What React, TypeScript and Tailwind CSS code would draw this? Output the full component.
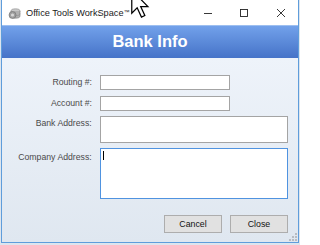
import React from "react";

const font = { fontFamily: '"Liberation Sans", Arial, sans-serif' };

function AppIcon() {
  return (
    <svg width="13" height="13" viewBox="0 0 13 13" className="shrink-0">
      <ellipse cx="7.5" cy="4" rx="4.5" ry="2.2" fill="#c8c8c8" stroke="#8a8a8a" strokeWidth="0.6" />
      <path d="M3 4 v5 a4.5 2.2 0 0 0 9 0 v-5" fill="#b0b0b0" stroke="#7c7c7c" strokeWidth="0.6" />
      <path d="M3 6.5 a4.5 2.2 0 0 0 9 0" fill="none" stroke="#8a8a8a" strokeWidth="0.6" />
      <ellipse cx="4.5" cy="8" rx="3.5" ry="3.5" fill="#9e9e9e" stroke="#6e6e6e" strokeWidth="0.6" />
      <ellipse cx="4.5" cy="8" rx="1.6" ry="1.6" fill="#d6d6d6" />
    </svg>
  );
}

function Cursor() {
  return (
    <svg
      width="20"
      height="30"
      viewBox="0 0 13 19"
      className="absolute left-[131px] top-[-11px]"
    >
      <path
        d="M0.5 0.5 L0.5 15.5 L4 12 L6.8 18 L9 17 L6.3 11.2 L11 11.2 Z"
        fill="#ffffff"
        stroke="#000000"
        strokeWidth="0.8"
        strokeLinejoin="miter"
      />
    </svg>
  );
}

function Grip() {
  const dots = [
    [6, 0],
    [3, 3],
    [6, 3],
    [0, 6],
    [3, 6],
    [6, 6],
  ];
  return (
    <svg width="8" height="8" viewBox="0 0 8 8" className="absolute right-[1px] bottom-[1px]">
      {dots.map(([x, y], i) => (
        <rect key={i} x={x} y={y} width="2" height="2" fill="#b8bcc2" />
      ))}
    </svg>
  );
}

export default function App() {
  return (
    <div className="relative w-[300px] h-[245px] overflow-hidden bg-[#dde5ee]" style={font}>
      <div className="ml-[1px] w-[298px] h-[243px] border border-t-0 border-[#5f9ddb] flex flex-col relative">
        {/* Title bar */}
        <div className="h-[25px] bg-white flex items-center shrink-0">
          <div className="ml-[6px] mt-[1px]">
            <AppIcon />
          </div>
          <span className="ml-[5px] text-[9.2px] text-[#1a1a1a] leading-none mt-[2px]">
            Office Tools WorkSpace<span className="text-[6px] align-top">™</span>
          </span>
          <div className="ml-auto flex items-center mt-[1px]">
            <svg width="10" height="10" viewBox="0 0 10 10" className="mr-[26px]">
              <line x1="1" y1="5.5" x2="9" y2="5.5" stroke="#222" strokeWidth="0.9" />
            </svg>
            <svg width="10" height="10" viewBox="0 0 10 10" className="mr-[27px]">
              <rect x="1.5" y="1.5" width="7" height="7" fill="none" stroke="#222" strokeWidth="0.9" />
            </svg>
            <svg width="10" height="10" viewBox="0 0 10 10" className="mr-[12px]">
              <line x1="1" y1="1" x2="9" y2="9" stroke="#222" strokeWidth="0.9" />
              <line x1="9" y1="1" x2="1" y2="9" stroke="#222" strokeWidth="0.9" />
            </svg>
          </div>
        </div>

        {/* Header */}
        <div className="h-[33px] shrink-0 border-t border-[#9dbff0] bg-gradient-to-b from-[#72a1ea] to-[#4673c8] flex items-center justify-center">
          <span className="text-white font-bold text-[16.5px] leading-none mb-[1px]">Bank Info</span>
        </div>

        {/* Body */}
        <div className="flex-1 bg-gradient-to-b from-[#eef3fa] to-[#dfe7f0] pt-[17px] pr-[10px] relative">
          <div className="flex">
            <div className="w-[90px] h-[15px] text-right text-[8.7px] leading-[15px] text-[#4a4a4a]">Routing #:</div>
            <div className="ml-[8px] w-[130px] h-[15px] bg-white border border-[#a4a4a4]" />
          </div>
          <div className="flex mt-[6px]">
            <div className="w-[90px] h-[15px] text-right text-[8.7px] leading-[15px] text-[#4a4a4a]">Account #:</div>
            <div className="ml-[8px] w-[130px] h-[15px] bg-white border border-[#a4a4a4]" />
          </div>
          <div className="flex mt-[5px]">
            <div className="w-[90px] text-right text-[8.7px] leading-[15px] text-[#4a4a4a]">Bank Address:</div>
            <div className="ml-[8px] w-[189px] h-[27px] bg-white border border-[#a4a4a4]" />
          </div>
          <div className="flex mt-[5px]">
            <div className="w-[90px] pt-[2px] text-right text-[8.7px] leading-[15px] text-[#4a4a4a]">Company Address:</div>
            <div className="ml-[8px] w-[189px] h-[51px] bg-white border border-[#4f93e0] pl-[2px] pt-[2px]">
              <div className="w-[1px] h-[9px] bg-black" />
            </div>
          </div>
          <div className="flex justify-end gap-[8px] mt-[16px]">
            <button className="w-[58px] h-[18px] bg-[#e1e1e1] border border-[#adadad] text-[8.8px] text-[#111] leading-none">
              Cancel
            </button>
            <button className="w-[58px] h-[18px] bg-[#e1e1e1] border border-[#adadad] text-[8.8px] text-[#111] leading-none">
              Close
            </button>
          </div>
          <Grip />
        </div>
      </div>
      <Cursor />
    </div>
  );
}
